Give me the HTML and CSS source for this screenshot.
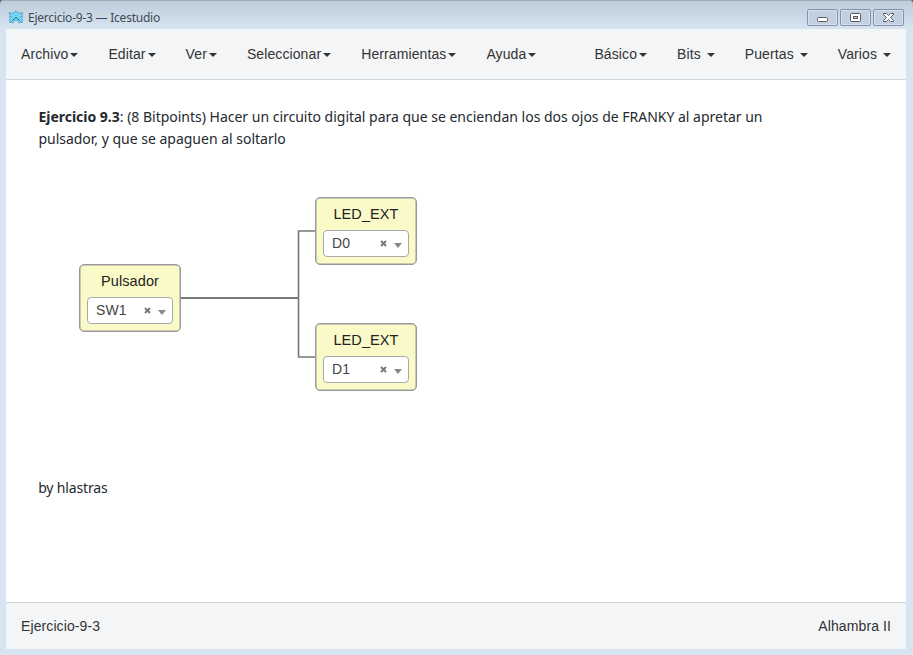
FILE: index.html
```html
<!DOCTYPE html>
<html lang="es">
<head>
<meta charset="utf-8">
<title>Ejercicio-9-3 — Icestudio</title>
<link rel="stylesheet" href="styles.css">
</head>
<body>
<div class="window">
  <header class="titlebar">
    <svg class="app-icon" width="16" height="14" viewBox="0 0 16 14">
      <path d="M1.500 2.500 4 3.500 8 1l4 2.500 2.500-1-.5 5 .5 4.500-3 1L8 9.500 4.500 13l-3-1L2 7.500z" fill="#6accf0" stroke="#3a9abb" stroke-dasharray="2 1"/>
      <path d="m2 4 5 3-5 3M14 4 9 7l5 3M5 5l3-2 3 2" fill="none" stroke="#a4e4fa" stroke-width=".7"/>
      <path d="m4.500 10.500 3-3h1l3 3" fill="none" stroke="#176886"/>
    </svg>
    <span class="title">Ejercicio-9-3 — Icestudio</span>
    <div class="controls">
      <span class="control"><svg width="29" height="15"><rect x="9.5" y="7.5" width="10" height="4" rx="1" fill="#fff" stroke="#555966"/></svg></span>
      <span class="control"><svg width="29" height="15"><rect x="9.5" y="3.5" width="10" height="8" rx="1" fill="#fff" stroke="#555966"/><rect x="12.5" y="6.5" width="4" height="2" fill="#c8d5e2" stroke="#555966"/></svg></span>
      <span class="control"><svg width="29" height="15"><path d="M9.500 3.500h3l2 2 2-2h3v1l-3 3 3 3v1h-3l-2-2-2 2h-3v-1l3-3-3-3z" fill="#fff" stroke="#555966"/></svg></span>
    </div>
  </header>
  <nav class="menubar">
    <div class="menu"><span>Archivo</span><i class="caret"></i></div>
    <div class="menu"><span>Editar</span><i class="caret"></i></div>
    <div class="menu"><span>Ver</span><i class="caret"></i></div>
    <div class="menu"><span>Seleccionar</span><i class="caret"></i></div>
    <div class="menu"><span>Herramientas</span><i class="caret"></i></div>
    <div class="menu"><span>Ayuda</span><i class="caret"></i></div>
    <div class="menu push"><span>Básico</span><i class="caret"></i></div>
    <div class="menu wide"><span>Bits</span><i class="caret"></i></div>
    <div class="menu wide"><span>Puertas</span><i class="caret"></i></div>
    <div class="menu wide"><span>Varios</span><i class="caret"></i></div>
  </nav>
  <main class="canvas">
    <p class="note heading"><b>Ejercicio 9.3</b>: (8 Bitpoints) Hacer un circuito digital para que se enciendan los dos ojos de FRANKY al apretar un<br>pulsador, y que se apaguen al soltarlo</p>
    <svg class="wires" width="900" height="522" fill="none" stroke="#777">
      <path d="M174 218H292.500" stroke-width="2"/>
      <path d="M310 151H292.500V277H310" stroke-width="1.600"/>
    </svg>
    <section class="block pulsador"><div class="label">Pulsador</div><div class="select"><span>SW1</span><svg class="clear" width="7" height="7"><path d="m1 1 5 5M6 1 1 6" stroke="#777" stroke-width="1.900"/></svg><i class="arrow"></i></div></section>
    <section class="block led-top"><div class="label">LED_EXT</div><div class="select"><span>D0</span><svg class="clear" width="7" height="7"><path d="m1 1 5 5M6 1 1 6" stroke="#777" stroke-width="1.900"/></svg><i class="arrow"></i></div></section>
    <section class="block led-bottom"><div class="label">LED_EXT</div><div class="select"><span>D1</span><svg class="clear" width="7" height="7"><path d="m1 1 5 5M6 1 1 6" stroke="#777" stroke-width="1.900"/></svg><i class="arrow"></i></div></section>
    <p class="note author">by hlastras</p>
  </main>
  <footer class="statusbar"><span>Ejercicio-9-3</span><span>Alhambra II</span></footer>
</div>
</body>
</html>
```
FILE: styles.css
```css
* { box-sizing: border-box; }
body { margin: 0; background: #555; overflow: hidden; }
.window {
  width: 913px;
  height: 655px;
  padding: 0 7px 6px 6px;
  display: flex;
  flex-direction: column;
  background: linear-gradient(#bccbda 0, #d7e4f1 29px);
  border-radius: 4px 4px 0 0;
  box-shadow: inset 0 1px #a5adb6;
  font: 14px/20px "Liberation Sans", Arial, sans-serif;
  letter-spacing: .1px;
  color: #333;
}
.titlebar {
  height: 29px;
  flex: none;
  display: flex;
  align-items: flex-start;
  padding: 9px 2px 0;
}
.app-icon { margin-top: 1px; }
.title {
  margin-left: 4px;
  font: 12px/17px "Noto Sans", sans-serif;
  letter-spacing: -.23px;
  color: #414a55;
}
.controls { margin-left: auto; display: flex; gap: 2px; }
.control {
  width: 31px;
  height: 17px;
  border: 1px solid #8593aa;
  border-radius: 2px;
  box-shadow: inset 0 0 0 1px #d6e1ec;
  background: #c2d0df;
}
.control svg { display: block; }
.menubar {
  height: 51px;
  flex: none;
  display: flex;
  align-items: center;
  gap: 30px;
  padding: 0 15px;
  background: #f4f5f7;
  border-bottom: 1px solid #d3d7da;
}
.menu { display: flex; align-items: center; gap: 2px; }
.menu.wide { gap: 6px; }
.push { margin-left: auto; }
.caret { border: 4px solid transparent; border-top-color: #333; border-bottom: 0; margin-top: 2px; }
.canvas { position: relative; flex: 1; background: #fff; }
.note {
  margin: 0;
  font: 14px/22px "Noto Sans", sans-serif;
  letter-spacing: -.01px;
  color: #24292e;
  white-space: nowrap;
}
.heading { padding: 26px 0 0 32.4px; }
.author { padding: 327px 0 0 32.2px; letter-spacing: -.15px; }
.wires { position: absolute; left: 0; top: 0; }
.block {
  position: absolute;
  width: 102px;
  height: 68px;
  padding: 6px;
  border: 1px solid #999;
  border-radius: 5px;
  box-shadow: inset 0 0 0 .5px #999;
  background: #fafac8;
}
.pulsador { left: 73px; top: 184px; }
.led-top { left: 309px; top: 117px; }
.led-bottom { left: 309px; top: 243px; }
.label { height: 26px; text-align: center; font-size: 14.5px; color: #222; }
.select {
  height: 27px;
  margin: 0 1px;
  display: flex;
  align-items: center;
  padding: 0 6px 1px 8px;
  border: 1px solid #aaa;
  border-radius: 4px;
  background: #fff;
  color: #444;
}
.clear { margin: 0 7px 0 auto; }
.arrow { border: 4.5px solid transparent; border-top: 5px solid #888; border-bottom: 0; margin-top: 4px; }
.statusbar {
  height: 47px;
  flex: none;
  display: flex;
  align-items: center;
  justify-content: space-between;
  padding: 0 15px;
  background: #f4f5f7;
  border-top: 1px solid #d3d7da;
}
```
